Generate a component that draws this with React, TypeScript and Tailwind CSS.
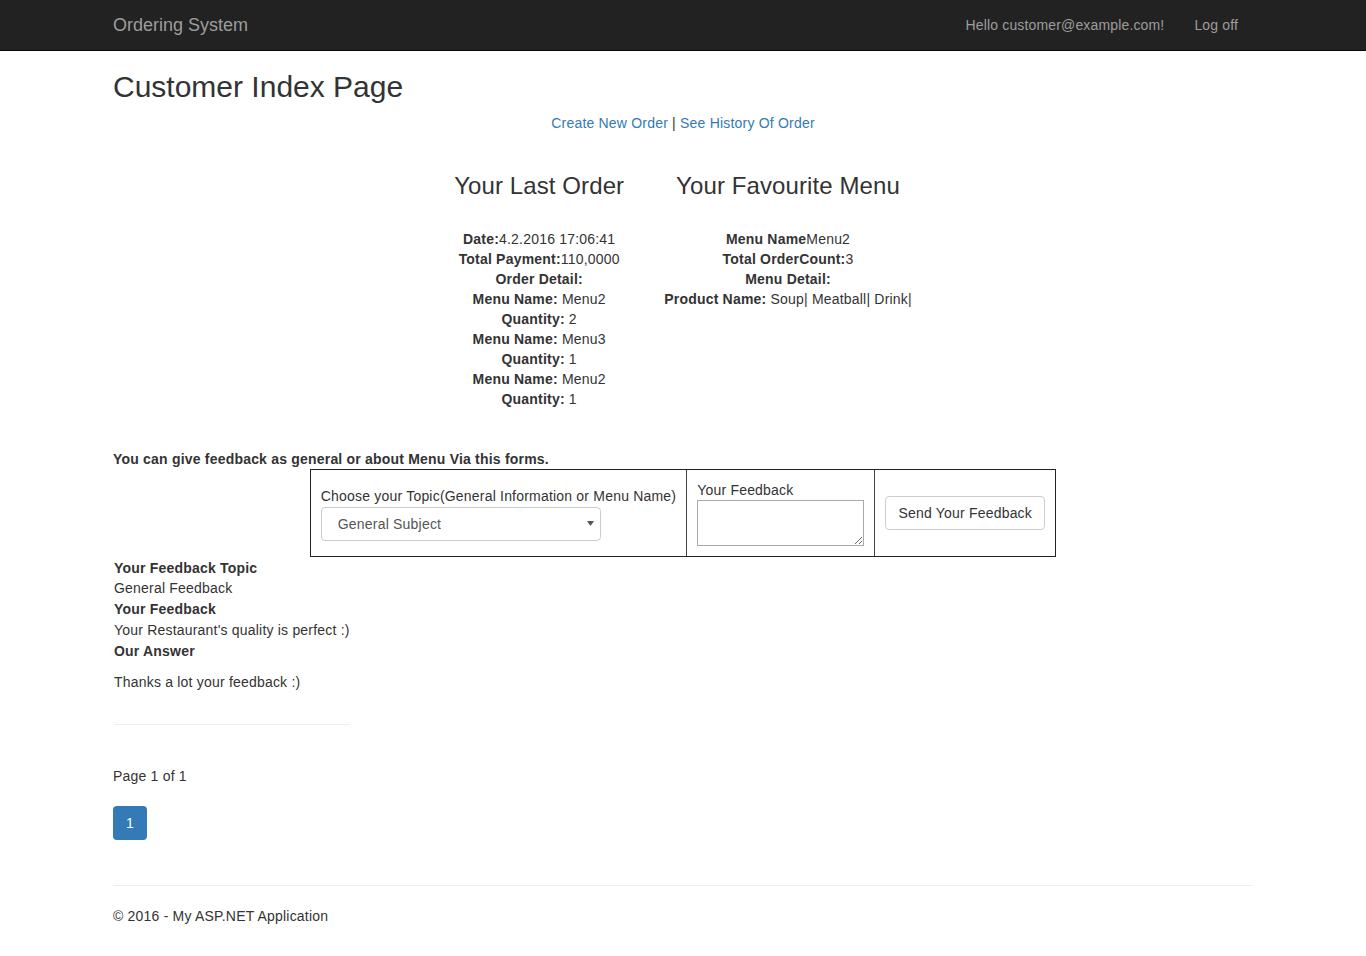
import React from "react";

const lastOrder: [string, string][] = [
  ["Date:", "4.2.2016 17:06:41"],
  ["Total Payment:", "110,0000"],
  ["Order Detail:", ""],
  ["Menu Name: ", "Menu2"],
  ["Quantity: ", "2"],
  ["Menu Name: ", "Menu3"],
  ["Quantity: ", "1"],
  ["Menu Name: ", "Menu2"],
  ["Quantity: ", "1"],
];

const favourite: [string, string][] = [
  ["Menu Name", "Menu2"],
  ["Total OrderCount:", "3"],
  ["Menu Detail:", ""],
  ["Product Name: ", "Soup| Meatball| Drink|"],
];

function InfoColumn({ title, rows }: { title: string; rows: [string, string][] }) {
  return (
    <div className="px-5 text-center">
      <h3 className="text-[24px] leading-[26px] tracking-[0.1px]">{title}</h3>
      <div className="mt-[30px]">
        {rows.map(([label, value], i) => (
          <div key={i} className="leading-[20px] whitespace-nowrap">
            <b>{label}</b>
            {value}
          </div>
        ))}
      </div>
    </div>
  );
}

export default function App() {
  return (
    <div className="min-h-[956px] bg-white font-['Liberation_Sans',Arial,sans-serif] text-[14px] leading-[20px] tracking-[0.2px] text-[#333]">
      {/* Top navbar */}
      <nav className="h-[51px] bg-[#222] border-b border-[#080808]">
        <div className="w-[1170px] mx-auto px-[15px] h-[50px] flex items-center justify-between">
          <a className="text-[18px] tracking-normal text-[#9d9d9d]">Ordering System</a>
          <div className="flex text-[#9d9d9d] tracking-[0.15px]">
            <a className="px-[15px]">Hello customer@example.com!</a>
            <a className="px-[15px]">Log off</a>
          </div>
        </div>
      </nav>

      <div className="w-[1170px] mx-auto px-[15px]">
        <h2 className="mt-[19px] text-[30px] leading-[33px] tracking-normal">Customer Index Page</h2>

        <div className="mt-[10px] text-center">
          <a className="text-[#337ab7]">Create New Order</a> | <a className="text-[#337ab7]">See History Of Order</a>
        </div>

        {/* Last order / favourite menu */}
        <div className="mt-[40px] flex justify-center">
          <InfoColumn title="Your Last Order" rows={lastOrder} />
          <InfoColumn title="Your Favourite Menu" rows={favourite} />
        </div>

        <p className="mt-[40px] font-bold">You can give feedback as general or about Menu Via this forms.</p>

        {/* Feedback form */}
        <div className="mx-auto w-fit h-[88px] flex border border-[#222]">
          <div className="px-[10px] flex flex-col justify-center">
            <label>Choose your Topic(General Information or Menu Name)</label>
            <div className="mt-px w-[280px] h-[34px] border border-[#ccc] rounded-[4px] flex items-center justify-between pl-4 pr-[6px] text-[#555]">
              <span>General Subject</span>
              <svg width="7" height="5" viewBox="0 0 7 5">
                <path d="M0 0h7L3.5 5z" fill="#555" />
              </svg>
            </div>
          </div>
          <div className="border-l border-[#444] px-[10px] flex flex-col justify-center">
            <label>Your Feedback</label>
            <textarea className="w-[167px] h-[46px] border border-[#a9a9a9] outline-none" />
          </div>
          <div className="border-l border-[#444] px-[10px] flex items-center">
            <button className="w-[160px] h-[34px] border border-[#ccc] rounded-[4px] bg-white text-[#333]">
              Send Your Feedback
            </button>
          </div>
        </div>

        {/* Previous feedback */}
        <div className="mt-px ml-px w-fit">
          <div className="font-bold">Your Feedback Topic</div>
          <div>General Feedback</div>
          <div className="mt-px font-bold">Your Feedback</div>
          <div className="mt-px">Your Restaurant's quality is perfect :)</div>
          <div className="mt-px font-bold">Our Answer</div>
          <p className="mt-[11px]">Thanks a lot your feedback :)</p>
          <div className="mt-[32px] h-px bg-[#eee]" />
        </div>

        <div className="mt-[41px]">Page 1 of 1</div>
        <div className="mt-[20px] w-[34px] h-[34px] rounded-[4px] bg-[#337ab7] text-white flex items-center justify-center">
          1
        </div>

        <div className="mt-[45px] h-px bg-[#eee]" />
        <footer className="mt-[20px]">© 2016 - My ASP.NET Application</footer>
      </div>
    </div>
  );
}
